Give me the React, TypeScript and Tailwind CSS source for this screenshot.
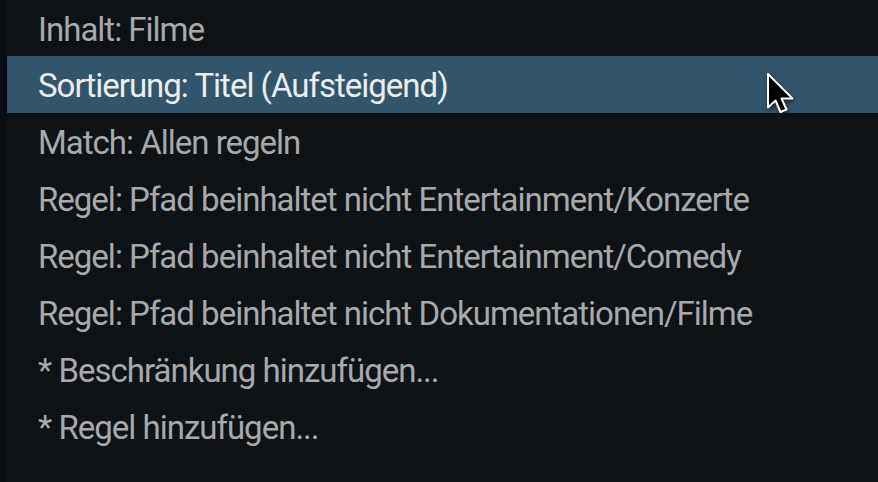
import React from "react";

const items = [
  "Inhalt: Filme",
  "Sortierung: Titel (Aufsteigend)",
  "Match: Allen regeln",
  "Regel: Pfad beinhaltet nicht Entertainment/Konzerte",
  "Regel: Pfad beinhaltet nicht Entertainment/Comedy",
  "Regel: Pfad beinhaltet nicht Dokumentationen/Filme",
  "* Beschränkung hinzufügen...",
  "* Regel hinzufügen...",
];

const Cursor = () => (
  <svg width="32" height="46" viewBox="0 0 32 46" className="drop-shadow-[1px_2px_2px_rgba(0,0,0,0.6)]">
    <path
      d="M3 3 V36.5 L10.5 29.5 L15.5 41 L21.5 38.5 L16.5 27.5 H27.5 Z"
      fill="#000"
      stroke="#fff"
      strokeWidth="2"
      strokeLinejoin="round"
    />
  </svg>
);

export default function App() {
  return (
    <div className="w-[878px] h-[482px] flex bg-[#0e1318] font-['Roboto',sans-serif] overflow-hidden">
      {/* left edge strip */}
      <div className="w-[7px] shrink-0 bg-[#0a0d11]" />

      <div className="flex-1 flex flex-col">
        {items.map((label, i) => {
          const active = i === 1;
          return (
            <div
              key={label}
              className={`relative shrink-0 flex items-center pl-[31px] pt-[3px] text-[33px] tracking-[-1px] whitespace-nowrap ${
                i === 0 ? "h-[56px]" : "h-[57px]"
              } ${active ? "bg-[#31566b] text-[#ececec]" : "text-[#a9a9a9]"}`}
            >
              {label}
              {active && (
                <div className="absolute left-[758px] top-[15px]">
                  <Cursor />
                </div>
              )}
            </div>
          );
        })}
      </div>
    </div>
  );
}
